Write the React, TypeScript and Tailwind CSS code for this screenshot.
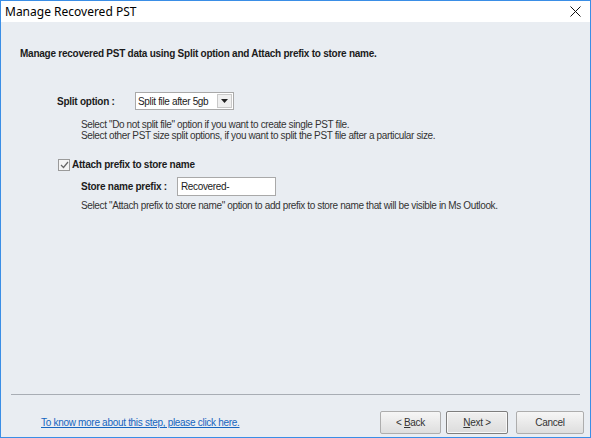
import { useState } from "react";

const body = { fontFamily: '"Liberation Sans", Arial, sans-serif' };

const App = () => {
  const [split, setSplit] = useState("Split file after 5gb");
  const [prefix, setPrefix] = useState("Recovered-");
  const [attach, setAttach] = useState(true);

  return (
    <div
      className="w-[591px] h-[438px] flex flex-col border border-t-0 border-[#3a8ee6] bg-[#e9edf2] text-[#1b1b1b] overflow-hidden"
      style={body}
    >
      {/* title bar */}
      <div className="h-[22px] bg-white flex items-center justify-between pl-[4px] pr-[8px] border-t border-[#3a8ee6]">
        <span className="text-[12px] text-black" style={{ fontFamily: '"Noto Sans", sans-serif' }}>
          Manage Recovered PST
        </span>
        <svg width="11" height="11" viewBox="0 0 11 11" className="mr-[1px]">
          <path d="M0.5 0.5 L10.5 10.5 M10.5 0.5 L0.5 10.5" stroke="#111" strokeWidth="1" />
        </svg>
      </div>

      {/* content */}
      <div className="flex-1 flex flex-col">
        <div className="pt-[24px] pl-[19px] text-[10px] font-bold tracking-[-0.25px]">
          Manage recovered PST data using Split option and Attach prefix to store name.
        </div>

        <div className="mt-[31px] pl-[56px] flex items-center">
          <span className="w-[78px] text-[10px] font-bold tracking-[-0.25px]">Split option :</span>
          <div className="relative w-[99px] h-[18px] bg-white border border-[#a9a9a9] flex items-center">
            <select
              value={split}
              onChange={(e) => setSplit(e.target.value)}
              className="appearance-none w-full h-full pl-[2px] text-[10px] tracking-[-0.35px] bg-transparent outline-none"
            >
              <option>Do not split file</option>
              <option>Split file after 5gb</option>
              <option>Split file after 10gb</option>
            </select>
            <div className="absolute right-[1px] top-[1px] bottom-[1px] w-[15px] bg-[#f0f0f0] border border-[#c9c9c9] flex items-center justify-center pointer-events-none">
              <svg width="7" height="4" viewBox="0 0 7 4">
                <path d="M0 0 H7 L3.5 4 Z" fill="#222" />
              </svg>
            </div>
          </div>
        </div>

        <div className="mt-[9px] pl-[80px] text-[10px] leading-[11px] tracking-[-0.37px] text-[#333]">
          <div>Select "Do not split file" option if you want to create single PST file.</div>
          <div>Select other PST size split options, if you want to split the PST file after a particular size.</div>
        </div>

        <label className="mt-[16px] pl-[57px] flex items-center gap-[2px] cursor-pointer">
          <span
            className="w-[12px] h-[12px] border border-[#9a9a9a] bg-[#f4f4f4] flex items-center justify-center"
            onClick={() => setAttach(!attach)}
          >
            {attach && (
              <svg width="9" height="8" viewBox="0 0 9 8">
                <path d="M1 4 L3.5 6.5 L8 1" stroke="#666" strokeWidth="1.2" fill="none" />
              </svg>
            )}
          </span>
          <span className="text-[10px] font-bold tracking-[-0.25px]">Attach prefix to store name</span>
        </label>

        <div className="mt-[5px] pl-[80px] flex items-center">
          <span className="w-[96px] text-[10px] font-bold tracking-[-0.25px]">Store name prefix :</span>
          <input
            value={prefix}
            onChange={(e) => setPrefix(e.target.value)}
            className="w-[99px] h-[19px] bg-white border border-[#a9a9a9] pl-[3px] text-[10px] tracking-[-0.35px] outline-none"
          />
        </div>

        <div className="mt-[2px] pl-[80px] text-[10px] tracking-[-0.37px] text-[#333]">
          Select "Attach prefix to store name" option to add prefix to store name that will be visible in Ms Outlook.
        </div>

        <div className="flex-1" />

        <div className="mx-[10px] border-t border-[#a8adb4]" />

        <div className="flex items-center justify-between pl-[40px] pr-[6px] pt-[16px] pb-[3px]">
          <a href="#" className="text-[10px] tracking-[-0.3px] text-[#1565c0] underline">
            To know more about this step, please click here.
          </a>
          <div className="flex gap-[5px] text-[#333]">
            <button className="w-[61px] h-[23px] border border-[#adadad] bg-gradient-to-b from-[#f6f6f6] to-[#dedede] text-[10px] tracking-[-0.3px] rounded-[2px]">
              &lt; <span className="underline">B</span>ack
            </button>
            <button className="w-[62px] h-[23px] border border-[#7e7e7e] bg-gradient-to-b from-[#f0f0f0] to-[#dcdcdc] text-[10px] tracking-[-0.3px] rounded-[2px] mr-[3px] shadow-[inset_0_0_0_1px_#f8f8f8]">
              <span className="underline">N</span>ext &gt;
            </button>
            <button className="w-[68px] h-[23px] border border-[#adadad] bg-gradient-to-b from-[#f6f6f6] to-[#dedede] text-[10px] tracking-[-0.3px] rounded-[2px]">
              Cancel
            </button>
          </div>
        </div>
      </div>
    </div>
  );
};

export default App;
